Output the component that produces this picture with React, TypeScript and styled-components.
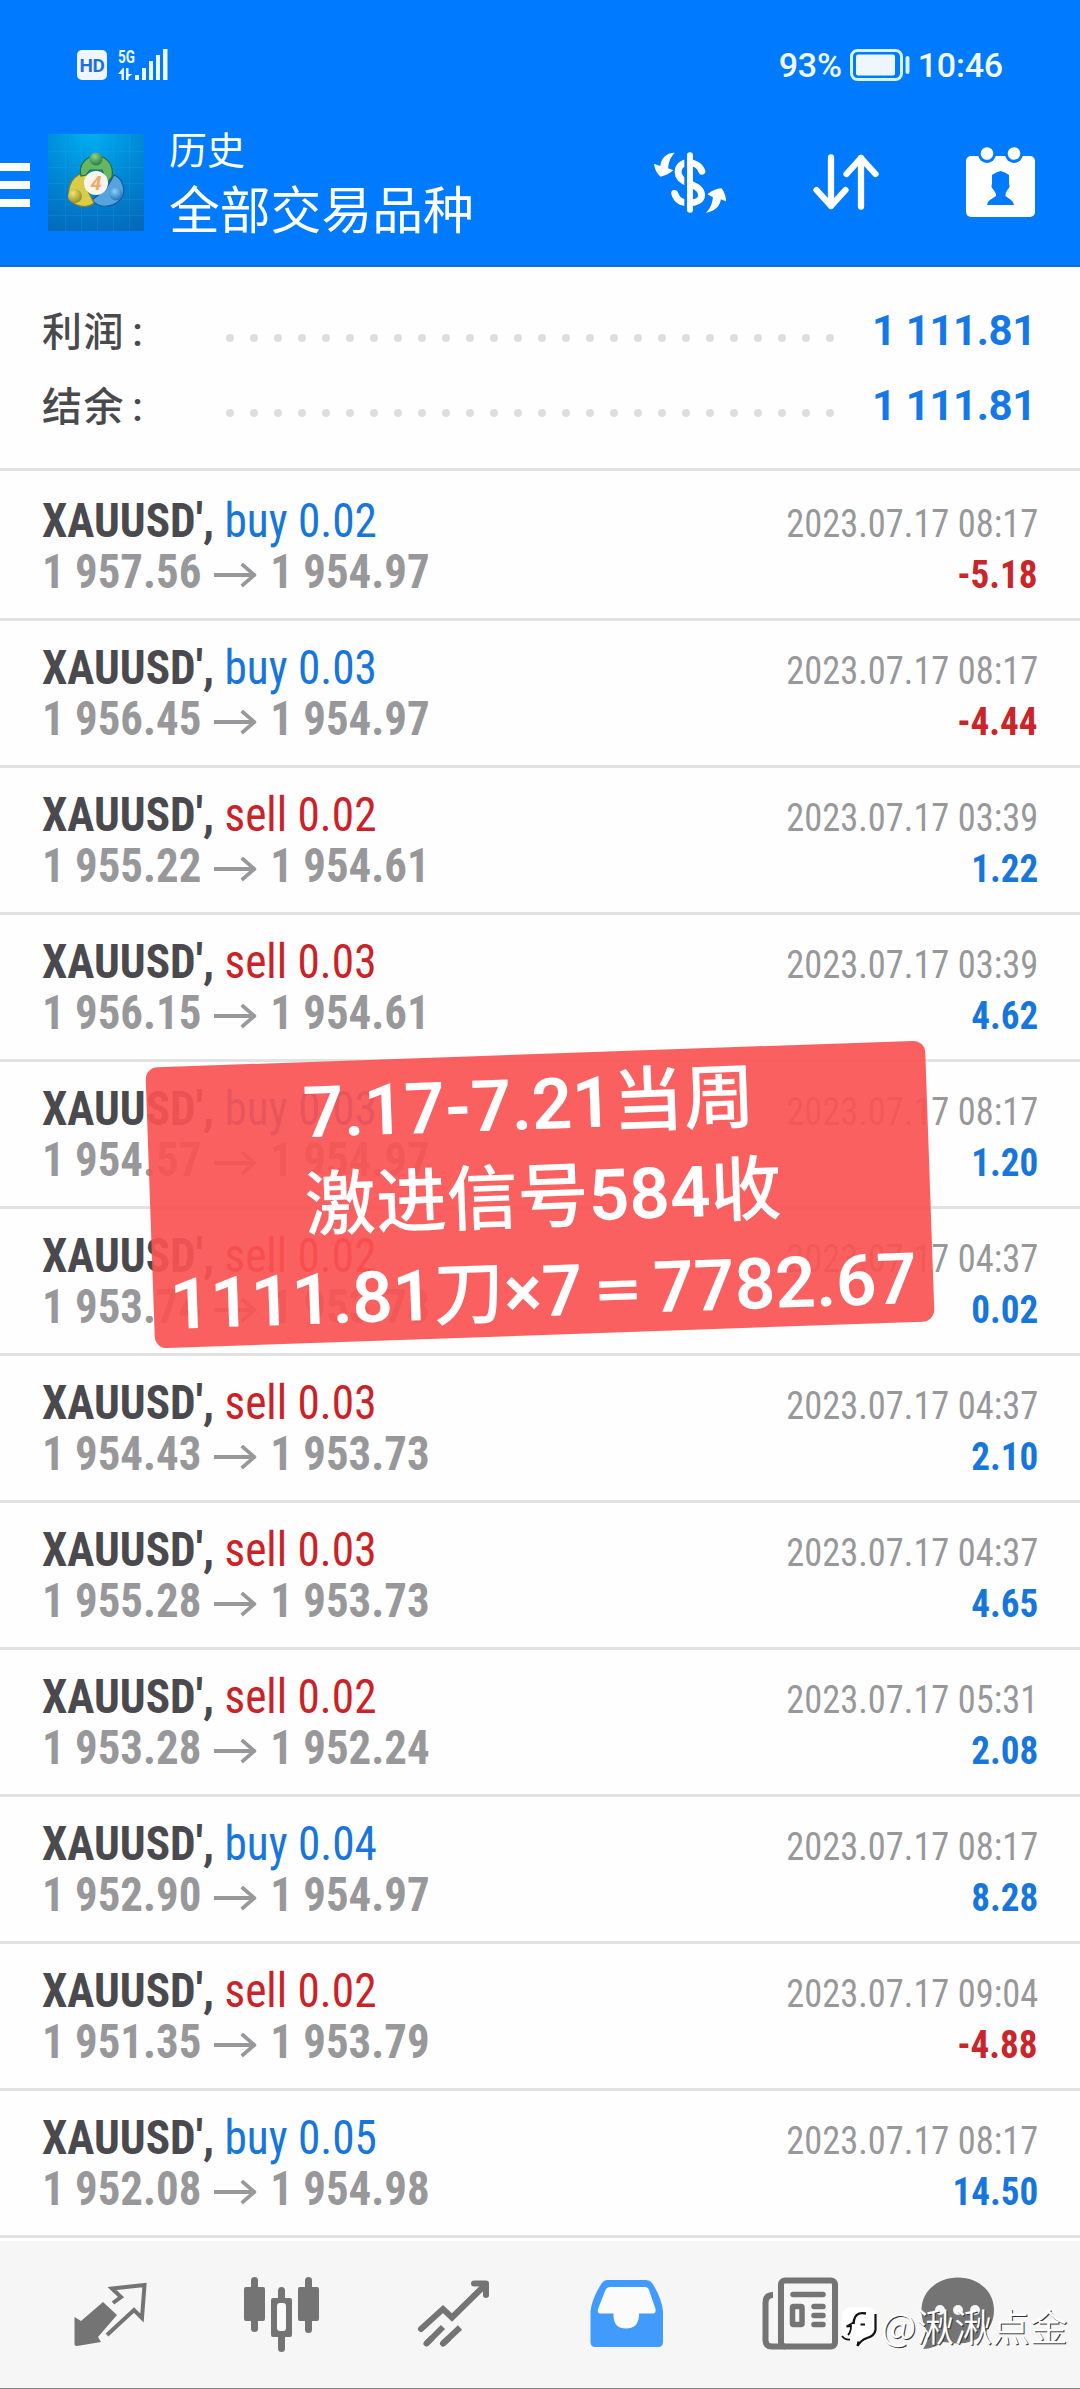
import React from "react";
import styled, { createGlobalStyle } from "styled-components";

const GlobalStyle = createGlobalStyle`
  html, body { margin: 0; padding: 0; background: #fefefe; }
  * { box-sizing: border-box; }
  svg { display: block; flex: none; }
`;

const latin = `Roboto, "Noto Sans CJK SC", sans-serif`;
const condensed = `"Roboto Condensed", Roboto, sans-serif`;
const cjk = `"Noto Sans CJK SC", sans-serif`;

const BLUE = "#007bff";

const Screen = styled.div`
  position: relative;
  width: 1080px;
  height: 2389px;
  overflow: hidden;
  display: flex;
  flex-direction: column;
  background: #fefefe;
  font-family: ${latin};
`;

const Header = styled.header`
  height: 267px;
  flex: none;
  background: ${BLUE};
  border-bottom: 2px solid #1a6cc4;
  display: flex;
  flex-direction: column;
`;

const StatusBar = styled.div`
  height: 130px;
  padding: 0 77px;
  display: flex;
  align-items: center;
  justify-content: space-between;
`;

const StatusGroup = styled.div<{ $gap: number }>`
  display: flex;
  align-items: center;
  gap: ${(p) => p.$gap}px;
`;

const StatusText = styled.span`
  font-size: 34px;
  line-height: 40px;
  color: #f2faff;
  letter-spacing: -0.2px;
  font-weight: 500;
`;

const HdBadge = styled.span`
  width: 30px;
  height: 30px;
  border-radius: 5px;
  background: #eef7ff;
  color: #1f6fd6;
  font: 700 19px/31px Roboto, sans-serif;
  letter-spacing: -0.4px;
  text-align: center;
`;

const Toolbar = styled.div`
  height: 104px;
  display: flex;
  align-items: center;
`;

const MenuBars = styled.div`
  width: 30px;
  height: 44px;
  display: flex;
  flex-direction: column;
  justify-content: space-between;
  margin: 6px 18px 0 0;
`;

const MenuBar = styled.i`
  height: 8px;
  background: #fff;
`;

const Titles = styled.div`
  margin-left: 25px;
  margin-bottom: 4px;
  flex: 1;
  color: #fff;
  font-family: ${cjk};
  display: flex;
  flex-direction: column;
`;

const Subtitle = styled.div`
  font-size: 38px;
  line-height: 54px;
`;

const Title = styled.div`
  font-size: 50.8px;
  line-height: 64px;
`;

const Actions = styled.div`
  display: flex;
  align-items: center;
  gap: 87px;
  padding-right: 45px;
`;

const Summary = styled.section`
  height: 204px;
  flex: none;
  padding: 26px 44px 0 42px;
  border-bottom: 3px solid #e2e2e2;
`;

const SummaryRow = styled.div`
  height: 75px;
  display: flex;
  align-items: center;
`;

const SummaryLabel = styled.span`
  width: 184px;
  font-weight: 500;
  font-size: 40px;
  line-height: 60px;
  letter-spacing: 1.6px;
  padding-top: 4px;
  color: #4a4a4d;
`;

const Colon = styled.span`
  margin-left: 7px;
`;

const Leader = styled.div`
  display: flex;
  gap: 16px;
  margin-top: 15px;
`;

const Dot = styled.i`
  width: 8px;
  height: 8px;
  border-radius: 50%;
  background: #dedede;
`;

const SummaryValue = styled.span`
  flex: 1;
  text-align: right;
  font-weight: 700;
  font-size: 42px;
  line-height: 60px;
  letter-spacing: -0.4px;
  color: #1479e6;
`;

const Deals = styled.main`
  display: flex;
  flex-direction: column;
  padding-top: 3px;
`;

const DealRow = styled.article`
  height: 147px;
  flex: none;
  padding: 22px 42px 20px;
  border-bottom: 3px solid #e2e2e2;
`;

const Line = styled.div`
  height: 51px;
  display: flex;
  align-items: baseline;
  justify-content: space-between;
  line-height: 51px;
  white-space: pre;
  font-family: ${condensed};
  font-stretch: 75%;
`;

const DealName = styled.span`
  font-size: 47.5px;
  transform: scaleX(0.953);
  transform-origin: left;
`;

const Symbol = styled.b`
  font-weight: 700;
  color: #4a4a4e;
`;

const Side = styled.span<{ $sell: boolean }>`
  color: ${(p) => (p.$sell ? "#cb2228" : "#1676dc")};
`;

const Prices = styled.span`
  display: flex;
  align-items: baseline;
  font-size: 47.5px;
  font-weight: 700;
  color: #98989a;
  transform: scaleX(0.944);
  transform-origin: left;
`;

const Time = styled.span`
  font-size: 39.5px;
  color: #98989a;
  transform: scaleX(0.922);
  transform-origin: right;
`;

const Profit = styled.b<{ $loss: boolean }>`
  font-size: 39.5px;
  color: ${(p) => (p.$loss ? "#c9252a" : "#1676dc")};
  transform: scaleX(0.94);
  transform-origin: right;
`;

const ArrowIcon = styled.svg`
  margin: 0 15px 3px 13px;
`;

const Nav = styled.nav`
  height: 148px;
  margin-top: 3px;
  flex: none;
  padding: 0 24px;
  background: #f6f6f6;
  border-bottom: 1px solid #858585;
  display: grid;
  grid-template-columns: repeat(6, 172px);
`;

const Banner = styled.div`
  position: absolute;
  left: 150px;
  top: 1054px;
  width: 780px;
  height: 281px;
  padding-top: 4px;
  border-radius: 12px;
  background: rgba(251, 83, 83, 0.92);
  transform: rotate(-2deg);
  display: flex;
  flex-direction: column;
  align-items: center;
  color: #fff;
`;

const BannerLine = styled.div<{ $shift: number }>`
  font-weight: 500;
  font-size: 71px;
  line-height: 93.4px;
  height: 93.4px;
  white-space: nowrap;
  margin-left: ${(p) => p.$shift}px;
`;

const Digits = styled.span`
  font-weight: 600;
`;

const Equals = styled.span`
  display: inline-block;
  width: 71px;
  text-align: center;
  font-size: 53px;
  font-weight: 900;
  line-height: 60px;
  vertical-align: 2px;
`;

const Watermark = styled.div`
  position: absolute;
  left: 840px;
  top: 2299px;
  height: 56px;
  display: flex;
  align-items: center;
  gap: 3px;
  font-family: ${cjk};
  font-weight: 350;
  font-size: 37.8px;
  line-height: 52px;
  color: #fff;
  text-shadow: 1px 1px 0 #333;
`;

const WatermarkName = styled.span`
  padding-bottom: 4px;
`;

type Deal = [side: string, volume: string, open: string, close: string, time: string, profit: string];

const deals: Deal[] = [
  ["buy", "0.02", "1 957.56", "1 954.97", "08:17", "-5.18"],
  ["buy", "0.03", "1 956.45", "1 954.97", "08:17", "-4.44"],
  ["sell", "0.02", "1 955.22", "1 954.61", "03:39", "1.22"],
  ["sell", "0.03", "1 956.15", "1 954.61", "03:39", "4.62"],
  ["buy", "0.03", "1 954.57", "1 954.97", "08:17", "1.20"],
  ["sell", "0.02", "1 953.74", "1 953.73", "04:37", "0.02"],
  ["sell", "0.03", "1 954.43", "1 953.73", "04:37", "2.10"],
  ["sell", "0.03", "1 955.28", "1 953.73", "04:37", "4.65"],
  ["sell", "0.02", "1 953.28", "1 952.24", "05:31", "2.08"],
  ["buy", "0.04", "1 952.90", "1 954.97", "08:17", "8.28"],
  ["sell", "0.02", "1 951.35", "1 953.79", "09:04", "-4.88"],
  ["buy", "0.05", "1 952.08", "1 954.98", "08:17", "14.50"],
];

const Signal = () => (
  <svg width="51" height="44" viewBox="0 -6 51 44" fill="#eaf8ff">
    <text x="0" y="13.500" fontFamily="Roboto" fontWeight="700" fontSize="18" textLength="17" lengthAdjust="spacingAndGlyphs">5G</text>
    <path d="M0 25L5 19H6V31H3.500V25Z M8 19V31H10.500V28L14.500 25H10.500V19Z" />
    <rect x="17" y="26" width="4" height="5" />
    <rect x="24" y="19" width="4" height="12" />
    <rect x="31" y="12" width="4" height="19" />
    <rect x="38" y="6" width="4" height="25" />
    <rect x="45" y="0" width="4.5" height="31" />
  </svg>
);

const Battery = () => (
  <svg width="60" height="32" viewBox="0 0 60 32" fill="none">
    <rect x="1.5" y="1.5" width="50" height="29" rx="6" stroke="#d5f2ff" strokeWidth="3" />
    <rect x="6" y="5.5" width="39" height="21" rx="2" fill="#eef6ff" />
    <rect x="55.5" y="7" width="4" height="18" rx="2" fill="#d5f2ff" />
  </svg>
);

const Logo = () => (
  <svg width="96" height="97" viewBox="0 0 96 97">
    <defs>
      <radialGradient id="lbg" cx=".45" cy="0" r="1.1">
        <stop offset="0" stopColor="#00aef0" />
        <stop offset=".55" stopColor="#0084d2" />
        <stop offset="1" stopColor="#0568b8" />
      </radialGradient>
      <radialGradient id="lg" cx=".4" cy=".3" r=".8">
        <stop offset="0" stopColor="#8fd08a" /><stop offset="1" stopColor="#17763a" />
      </radialGradient>
      <radialGradient id="ly" cx=".35" cy=".3" r=".8">
        <stop offset="0" stopColor="#efe674" /><stop offset="1" stopColor="#8f8618" />
      </radialGradient>
      <radialGradient id="lb" cx=".4" cy=".3" r=".8">
        <stop offset="0" stopColor="#8bd0f8" /><stop offset="1" stopColor="#1668b4" />
      </radialGradient>
    </defs>
    <rect width="96" height="97" fill="url(#lbg)" />
    <path d="M17.5 0V97M33.500 0V97M49.500 0V97M65.500 0V97M81.500 0V97M0 17.500H96M0 33.500H96M0 49.500H96M0 65.500H96M0 81.500H96" stroke="#35a9ec" strokeWidth="1" opacity=".2" />
    <path d="M66 41C76 45 78 58 73 65C64 75 50 74 44 66L58 55Z" fill="#55a4dd" stroke="#155a9c" strokeWidth="1.200" />
    <path d="M39 39C25 39 19 52 21 64C26 73 39 75 46 69L40 57Z" fill="#d8cc48" stroke="#857c22" strokeWidth="1.200" />
    <path d="M33 42C30 31 38 22 48 22C59 22 66 31 64 43L59 49L54 36H42L38 41Z" fill="#66b663" stroke="#226f35" strokeWidth="1.200" />
    <circle cx="48" cy="25" r="6.500" fill="url(#lg)" />
    <circle cx="27" cy="62" r="7" fill="url(#ly)" />
    <circle cx="68" cy="60" r="6.500" fill="url(#lb)" />
    <circle cx="48" cy="49" r="12" fill="#f8f4ee" />
    <text x="48" y="56" textAnchor="middle" fontFamily="Roboto" fontWeight="700" fontStyle="italic" fontSize="20" fill="#f2a866">4</text>
  </svg>
);

const DollarIcon = () => (
  <svg width="72" height="61" viewBox="331 458 209 183" preserveAspectRatio="none">
    <path d="M470 516C464 498 448 490 432 490C412 490 401 501 401 518C401 536 413 545 433 553C457 562 469 571 469 588C469 604 452 611 432 611C410 611 396 600 391 582" fill="none" stroke="#fff" strokeWidth="20" strokeLinecap="round" />
    <path d="M419 478H428V632H419Z" fill={BLUE} />
    <rect x="427" y="459" width="17" height="181" rx="8" fill="#fff" />
    <path d="M391 460C366 461 353 475 349 500L331 493Q334 518 350 532Q368 529 387 513L372 507C374 485 379 474 391 460Z" fill="#fff" />
    <path d="M482 640C507 637 523 620 525 600L541 606Q537 578 527 567Q505 568 486 585L502 594C500 615 494 628 482 640Z" fill="#fff" />
  </svg>
);

const SortIcon = () => (
  <svg width="66" height="56" viewBox="0 0 66 56" fill="none" stroke="#fff" strokeWidth="6.300" strokeLinecap="round" strokeLinejoin="round">
    <path d="M18 3.500V52M3.500 36L18 52L32.500 36" />
    <path d="M48 52.500V4M33.500 20L48 4L62.500 20" />
  </svg>
);

const CalendarIcon = () => (
  <svg width="69" height="70" viewBox="0 0 69 70">
    <rect y="9" width="69" height="61" rx="5" fill="#fff" />
    <circle cx="21" cy="7" r="9" fill={BLUE} />
    <circle cx="48" cy="7" r="9" fill={BLUE} />
    <circle cx="21" cy="6.500" r="6.300" fill="#fff" />
    <circle cx="48" cy="6.500" r="6.300" fill="#fff" />
    <path d="M26 28Q30 25 34.500 24Q39 25 43 28V37Q44.500 40 42 42Q40 45 39.500 47V49L45 53Q48 55 48 58H21Q21 55 24 53L30 49V47Q29 45 27 42Q24.500 40 26 37Z" fill={BLUE} />
  </svg>
);

const PriceArrow = () => (
  <ArrowIcon width="45" height="25" viewBox="0 0 45 25" fill="none" stroke="#98989a" strokeWidth="3.800">
    <path d="M0 12H43M29.500 1L43 12L29.500 23" />
  </ArrowIcon>
);

const GREY = "#747474";

const navIcons = [
  <>
    <path d="M103 2302L117 2315L98 2337L101 2342L77 2346Q74 2346 74.500 2343V2317L81 2321Z" fill={GREY} />
    <path d="M113 2303L121 2297L112 2288.500L144.500 2285L142 2318L134 2310L107 2335" fill="none" stroke={GREY} strokeWidth="4" />
  </>,
  <>
    <g fill={GREY}>
      <rect x="251" y="2277" width="7" height="55" rx="3.500" />
      <rect x="244" y="2287" width="21" height="34" rx="2" />
      <rect x="305" y="2277" width="7" height="56" rx="3.500" />
      <rect x="298" y="2287" width="21" height="34" rx="2" />
      <rect x="278" y="2287" width="7" height="65" rx="3.500" />
      <rect x="271" y="2298" width="21" height="39" rx="2" />
    </g>
    <rect x="277" y="2303" width="9" height="28" rx="3" fill="#fafafa" />
  </>,
  <g fill="none" stroke={GREY} strokeWidth="6" strokeLinecap="round">
    <path d="M421 2329L443 2309L452 2317.500L485 2285" strokeLinejoin="miter" />
    <path d="M474 2283.500H486V2295" strokeLinejoin="round" />
    <path d="M426.500 2343.500L443 2327M443 2343.500L460 2327.500" strokeLinecap="butt" />
    <path d="M426.500 2343.500L431 2339M443 2343.500L448 2339" />
  </g>,
  <>
    <path d="M607 2280H646Q651 2280 654 2286Q662 2300 663 2311V2342Q663 2347 658 2347H595Q590.500 2347 590.500 2342V2311Q592 2299 600 2286Q603 2280 607 2280Z" fill="#419bfc" />
    <path d="M610 2287H645Q648 2287 649 2290L655.500 2309Q656 2313.500 653 2313.500H639V2316Q638 2328.500 626 2328.500Q614 2328.500 613.500 2316V2313.500H600Q597 2313 598 2309L605.500 2290Q607 2287 610 2287Z" fill="#fbfbfb" />
  </>,
  <g fill="none" stroke={GREY} strokeWidth="6">
    <rect x="781" y="2280.500" width="54" height="66" rx="4" />
    <path d="M773 2295Q765.500 2295 765.500 2303V2340Q765.500 2346.500 772 2346.500H785" />
    <path d="M793 2294.500H823M814 2306.500H823M814 2315.500H823M814 2324.500H823" strokeWidth="5.500" strokeLinecap="round" />
    <rect x="792.500" y="2306.500" width="9.500" height="18" rx="1" strokeWidth="5.500" />
  </g>,
  <>
    <path d="M958 2277.500C978 2277.500 994 2291 994 2310C994 2330 978 2343.500 958 2343.500C952 2343.500 947 2342 943 2342C937 2346 930 2349 923 2349C926 2345 929 2338 928 2332C924 2327 921.500 2319 921.500 2310C921.500 2291 938 2277.500 958 2277.500Z" fill={GREY} />
    <g fill="#f6f6f6">
      <circle cx="940" cy="2310" r="5" /><circle cx="958" cy="2310" r="5" /><circle cx="975" cy="2310" r="5" />
    </g>
  </>,
];

const WatermarkLogo = () => (
  <svg width="38" height="46" viewBox="0 0 38 46">
    <path d="M11 3H29Q36 4 36 11V27Q35 34 28 35.500Q24 38 18 43L15 36Q6 37 2 31V11Q3 4 11 3Z" fill="#fff" />
    <path d="M35.500 10V26Q34.500 32 27 34Q21 36 17.500 42L18.500 37.500" fill="none" stroke="#111" strokeWidth="2.200" />
    <path d="M26 9.500Q16 7.500 14 16L13.500 20" fill="none" stroke="#111" strokeWidth="2.400" />
    <path d="M13.500 18.500L6.500 22.500L11 22Q11 28 8 31M2 32Q5 36 10 35.500M20.500 20.500H25" fill="none" stroke="#111" strokeWidth="1.800" />
  </svg>
);

const SummaryLine = ({ label, value }: { label: string; value: string }) => (
  <SummaryRow>
    <SummaryLabel>{label}<Colon>:</Colon></SummaryLabel>
    <Leader>{Array.from({ length: 26 }, (_, i) => <Dot key={i} />)}</Leader>
    <SummaryValue>{value}</SummaryValue>
  </SummaryRow>
);

export default function App() {
  return (
    <Screen>
      <GlobalStyle />
      <Header>
        <StatusBar>
          <StatusGroup $gap={11}>
            <HdBadge>HD</HdBadge>
            <Signal />
          </StatusGroup>
          <StatusGroup $gap={8}>
            <StatusText>93%</StatusText>
            <Battery />
            <StatusText>10:46</StatusText>
          </StatusGroup>
        </StatusBar>
        <Toolbar>
          <MenuBars><MenuBar /><MenuBar /><MenuBar /></MenuBars>
          <Logo />
          <Titles>
            <Subtitle>历史</Subtitle>
            <Title>全部交易品种</Title>
          </Titles>
          <Actions>
            <DollarIcon />
            <SortIcon />
            <CalendarIcon />
          </Actions>
        </Toolbar>
      </Header>

      <Summary>
        <SummaryLine label="利润" value="1 111.81" />
        <SummaryLine label="结余" value="1 111.81" />
      </Summary>

      <Deals>
        {deals.map(([side, volume, open, close, time, profit], i) => (
          <DealRow key={i}>
            <Line>
              <DealName>
                <Symbol>XAUUSD', </Symbol>
                <Side $sell={side === "sell"}>{side} {volume}</Side>
              </DealName>
              <Time>2023.07.17 {time}</Time>
            </Line>
            <Line>
              <Prices>
                <span>{open}</span>
                <PriceArrow />
                <span>{close}</span>
              </Prices>
              <Profit $loss={profit.startsWith("-")}>{profit}</Profit>
            </Line>
          </DealRow>
        ))}
      </Deals>

      <Nav>
        {navIcons.map((icon, i) => (
          <svg key={i} width="172" height="147" viewBox={`${24 + i * 172} 2241 172 147`}>{icon}</svg>
        ))}
      </Nav>

      <Banner>
        <BannerLine $shift={-16}><Digits>7.17-7.21</Digits>当周</BannerLine>
        <BannerLine $shift={6}>激进信号<Digits>584</Digits>收</BannerLine>
        <BannerLine $shift={0}>
          <Digits>1111.81</Digits>刀<Digits>×7</Digits><Equals>＝</Equals><Digits>7782.67</Digits>
        </BannerLine>
      </Banner>

      <Watermark>
        <WatermarkLogo />
        <WatermarkName>@湫湫点金</WatermarkName>
      </Watermark>
    </Screen>
  );
}
